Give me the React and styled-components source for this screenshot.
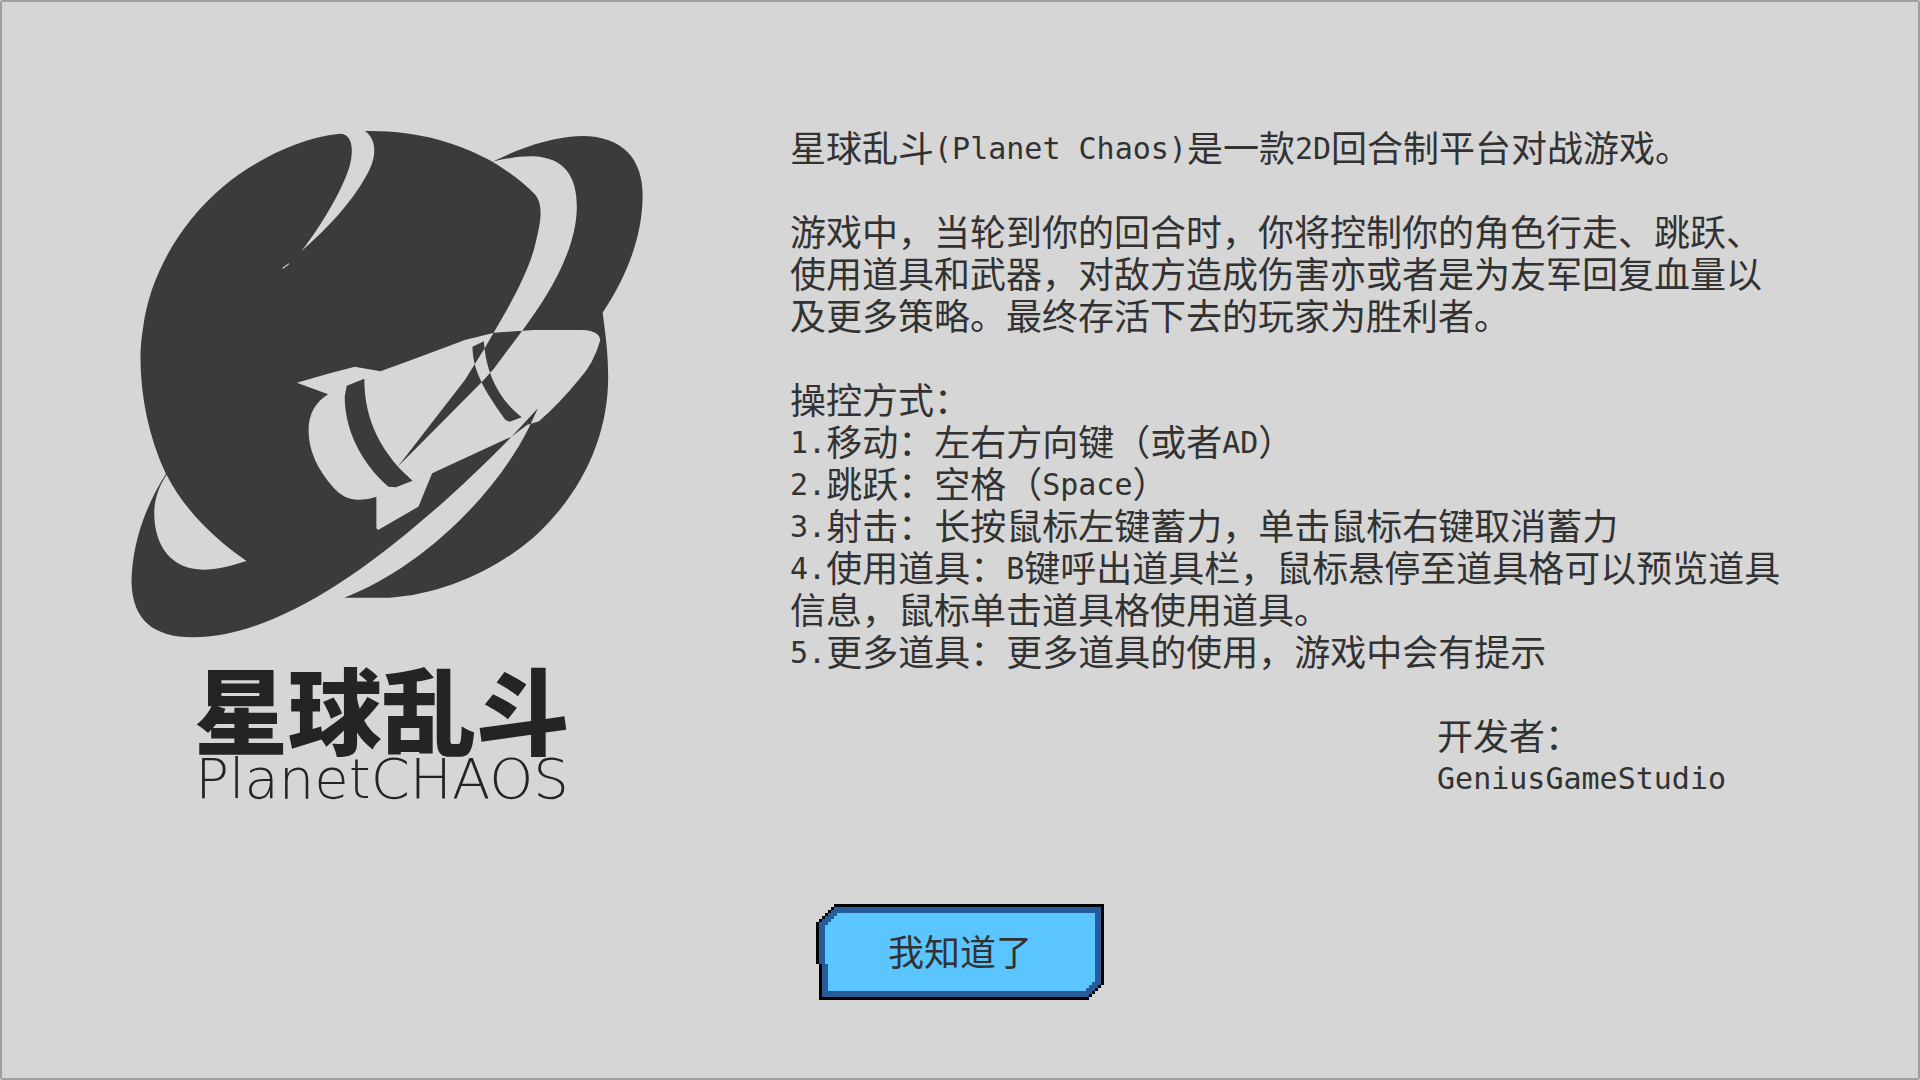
import React from 'react';
import styled, { createGlobalStyle } from 'styled-components';

const GlobalStyle = createGlobalStyle`
  *, *::before, *::after { box-sizing: border-box; }
  body {
    margin: 0;
    background: #d6d6d6;
    color: #323232;
    font-family: "Noto Sans CJK SC", "Noto Sans", sans-serif;
    text-spacing-trim: space-all;
    text-autospace: no-autospace;
  }
`;

const Page = styled.div`
  min-height: 100vh;
  display: flex;
  flex-direction: column;
  align-items: center;
  border: 2px solid #a0a0a0;
  border-radius: 3px;
  padding: 123px 128px 72px;
`;

const Content = styled.main`
  align-self: stretch;
  display: flex;
  align-items: flex-start;
  gap: 143px;
`;

const Brand = styled.section`
  flex: 0 0 517px;
  padding-top: 5px;
`;

const Planet = styled.svg`
  display: block;
  width: 517px;
  height: 509px;
`;

const BrandText = styled.header`
  display: flex;
  flex-direction: column;
  align-items: center;
  gap: 4px;
  width: 504px;
  padding-top: 24px;
  color: #232426;
  white-space: nowrap;
`;

const BrandName = styled.h1`
  margin: 0;
  font-size: 94px;
  font-weight: 900;
  line-height: 88px;
`;

const BrandLatin = styled.p`
  margin: 0;
  font-family: "DejaVu Sans Light", "DejaVu Sans", sans-serif;
  font-size: 56px;
  font-weight: 200;
  line-height: 48px;
`;

const Guide = styled.section`
  flex: 0 1 1000px;
  display: flex;
  flex-direction: column;
  gap: 42px;
  font-size: 36px;
  line-height: 42px;
`;

const Paragraph = styled.p`
  margin: 0;
`;

const Heading = styled.h2`
  margin: 0;
  font-size: 36px;
  font-weight: 400;
`;

const Steps = styled.ol`
  list-style: none;
  margin: 0;
  padding: 0;
`;

const Credits = styled.footer`
  align-self: flex-end;
  padding-right: 64px;
`;

const Latin = styled.span`
  font-family: "DejaVu Sans Mono", monospace;
  font-size: 30px;
  line-height: 24px;
  vertical-align: 3px;
`;

const Confirm = styled.button`
  position: relative;
  width: 288px;
  height: 96px;
  margin-top: 101px;
  padding: 0 0 4px;
  border: 0;
  background: none;
  color: #323232;
  font: inherit;
  font-size: 36px;
  line-height: 42px;
  cursor: pointer;
`;

const Frame = styled.svg`
  position: absolute;
  inset: 0;
  width: 100%;
  height: 100%;
`;

const Label = styled.span`
  position: relative;
`;

const steps = [
  ['1.', '移动：左右方向键（或者', 'AD', '）'],
  ['2.', '跳跃：空格（', 'Space', '）'],
  ['3.', '射击：长按鼠标左键蓄力，单击鼠标右键取消蓄力'],
  ['4.', '使用道具：', 'B', '键呼出道具栏，鼠标悬停至道具格可以预览道具信息，鼠标单击道具格使用道具。'],
  ['5.', '更多道具：更多道具的使用，游戏中会有提示'],
];

// Silhouette first; the ring gap, rocket and stripes invert whatever they cross.
const planetPath = [
  'M630 72 C520 85 390 150 300 228 C170 340 85 500 66 650 Q58 700 58 740 C58 860 82 980 132 1092',
  'C70 1190 32 1310 32 1420 C36 1530 95 1582 210 1582 C420 1582 660 1420 860 1245 C960 1160 1060 1060 1140 975 L1212 895',
  'L1185 955 C1080 1170 860 1380 650 1463 L780 1463 C930 1455 1090 1380 1200 1282 C1340 1150 1416 980 1416 800 C1416 730 1408 670 1400 608',
  'C1470 500 1515 380 1516 260 C1518 150 1460 78 1340 78 C1250 80 1160 115 1080 155 C980 98 860 60 710 63',
  'C745 90 745 140 715 195 C670 280 600 355 525 424 C580 350 640 250 665 170 C680 110 670 66 630 72 Z',
  'M134 1094 C175 1180 255 1275 366 1353 C320 1368 280 1379 240 1379 C150 1379 98 1310 98 1210 C98 1170 110 1130 134 1094 Z',
  'M1080 155 C1120 145 1160 138 1200 139 C1290 144 1325 200 1325 290 C1325 420 1240 560 1168 660 L1085 775 L1050 815 L805 1070 L1000 810 L1060 710 L1085 665',
  'C1140 570 1180 490 1200 420 C1220 340 1230 290 1205 255 Q1160 205 1080 155 Z',
  'M512 818 L600 792 L680 770 L755 784 L870 740 L1000 690 L1085 668 L1200 660 L1340 660 Q1390 662 1393 690 Q1375 760 1330 810 Q1275 880 1215 934 L1180 945 L1135 980',
  'L905 1090 Q885 1140 865 1190 L748 1260 L743 1255 L743 1160 Q720 1169 690 1169 Q650 1170 620 1135 Q546 1050 546 960 Q546 890 603 853 Z',
  'M657 827 L708 806 C708 900 735 1010 848 1112 L800 1132 L778 1130 C700 1060 651 960 651 860 Z',
  'M1022 710 L1055 694 C1060 790 1100 870 1165 922 L1130 935 L1118 930 C1070 860 1022 790 1022 710 Z',
  'M470 478 L472 472 L490 459 L488 464 Z',
].join(' ');

function Step({ parts }) {
  return (
    <li>
      {parts.map((part, i) =>
        /^[\x20-\x7e]+$/.test(part) ? <Latin key={i}>{part}</Latin> : part
      )}
    </li>
  );
}

export default function App() {
  return (
    <>
      <GlobalStyle />
      <Page>
        <Content>
          <Brand>
            <Planet viewBox="29 60 1550 1527" aria-hidden="true">
              <path d={planetPath} transform="scale(1.0332 1)" fill="#3b3b3b" fillRule="evenodd" />
            </Planet>
            <BrandText>
              <BrandName>星球乱斗</BrandName>
              <BrandLatin>PlanetCHAOS</BrandLatin>
            </BrandText>
          </Brand>
          <Guide>
            <Paragraph>
              星球乱斗<Latin>(Planet Chaos)</Latin>是一款<Latin>2D</Latin>回合制平台对战游戏。
            </Paragraph>
            <Paragraph>
              游戏中，当轮到你的回合时，你将控制你的角色行走、跳跃、使用道具和武器，对敌方造成伤害亦或者是为友军回复血量以及更多策略。最终存活下去的玩家为胜利者。
            </Paragraph>
            <div>
              <Heading>操控方式：</Heading>
              <Steps>
                {steps.map((parts) => (
                  <Step key={parts[0]} parts={parts} />
                ))}
              </Steps>
            </div>
            <Credits>
              开发者：
              <br />
              <Latin>GeniusGameStudio</Latin>
            </Credits>
          </Guide>
        </Content>
        <Confirm type="button">
          <Frame viewBox="0 0 96 32" shapeRendering="crispEdges" aria-hidden="true">
            <path fill="#000" d="M6 0H96V27H95V28H94V29H93V30H92V31H91V32H1V20H0V6H1V5H2V4H3V3H4V2H5V1H6Z" />
            <path fill="#265c98" d="M6 1H95V27H94V28H93V29H92V30H91V31H2V20H1V6H2V5H3V4H4V3H5V2H6Z" />
            <path fill="#5bc5ff" d="M7 3H93V26H92V27H91V28H90V29H4V20H3V7H4V6H5V5H6V4H7Z" />
          </Frame>
          <Label>我知道了</Label>
        </Confirm>
      </Page>
    </>
  );
}
